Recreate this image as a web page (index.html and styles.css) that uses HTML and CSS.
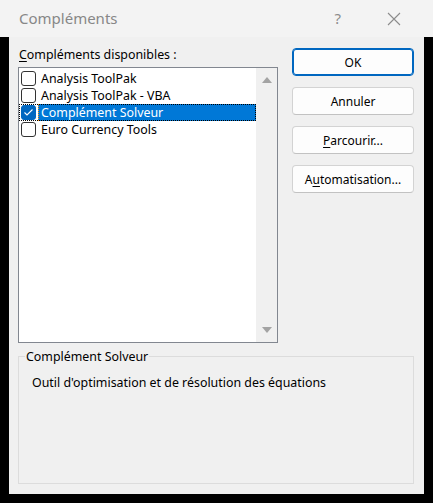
FILE: index.html
```html
<!DOCTYPE html>
<html lang="fr">
<head>
    <meta charset="UTF-8">
    <meta name="viewport" content="width=device-width, initial-scale=1.0">
    <title>Compléments</title>
    <link rel="stylesheet" href="styles.css">
</head>
<body>
    <div class="titlebar">
        <span class="title">Compléments</span>
        <span class="help">?</span>
        <svg class="close" width="14" height="14" viewBox="0 0 14 14">
            <path d="M1 1 L13 13 M13 1 L1 13" stroke="#8c8c8c" stroke-width="1.1" fill="none"/>
        </svg>
    </div>

    <div class="dialog">
        <div class="top">
            <div class="left">
                <div class="label"><u>C</u>ompléments disponibles :</div>
                <div class="listbox">
                    <div class="items">
                        <div class="item"><span class="check"></span><span class="name">Analysis ToolPak</span></div>
                        <div class="item"><span class="check"></span><span class="name">Analysis ToolPak - VBA</span></div>
                        <div class="item selected">
                            <span class="check checked">
                                <svg width="11" height="9" viewBox="0 0 11 9"><path d="M1.5 4.5 L4 7 L9.5 1.5" stroke="#fff" stroke-width="1.1" fill="none"/></svg>
                            </span>
                            <span class="name">Complément Solveur</span>
                        </div>
                        <div class="item"><span class="check"></span><span class="name">Euro Currency Tools</span></div>
                    </div>
                    <div class="scrollbar">
                        <span class="arrow up"></span>
                        <span class="arrow down"></span>
                    </div>
                </div>
            </div>
            <div class="buttons">
                <button class="default">OK</button>
                <button>Annuler</button>
                <button><u>P</u>arcourir...</button>
                <button>A<u>u</u>tomatisation...</button>
            </div>
        </div>

        <div class="group">
            <div class="group-title">Complément Solveur</div>
            <div class="group-text">Outil d'optimisation et de résolution des équations</div>
        </div>
    </div>
</body>
</html>
```

FILE: styles.css
```css
body {
    margin: 0;
    width: 433px;
    height: 503px;
    background: #000;
    font-family: "Noto Sans", "Open Sans", sans-serif;
    font-size: 12.4px;
    color: #000;
    overflow: hidden;
}
u {
    text-decoration-thickness: 1px;
    text-underline-offset: 2px;
}

/* window caption */
.titlebar {
    height: 37px;
    background: #f3f3f3;
    display: flex;
    align-items: center;
    padding-left: 19px;
}
.title {
    font-size: 15px;
    color: #878787;
    flex: 1;
    margin-top: -1px;
}
.help {
    font-size: 15px;
    color: #8c8c8c;
    margin-right: 46px;
    margin-top: -1px;
}
.close {
    margin-right: 32px;
}

/* dialog body */
.dialog {
    margin: 0 9px;
    height: 457px;
    box-sizing: border-box;
    background: #f0f0f0;
    padding: 10px 10px 0 9px;
}
.top {
    display: flex;
    gap: 14px;
}
.left {
    width: 260px;
}
.label {
    line-height: 16px;
    padding-left: 1px;
    margin-bottom: 4px;
}

/* list of add-ins */
.listbox {
    height: 276px;
    box-sizing: border-box;
    border: 1px solid #828790;
    background: #fff;
    display: flex;
}
.items {
    flex: 1;
    padding-top: 2px;
}
.item {
    height: 17px;
    display: flex;
    align-items: center;
}
.check {
    width: 13px;
    height: 13px;
    border: 1px solid #333;
    border-radius: 3px;
    background: #fff;
    margin-left: 2px;
    margin-right: 2px;
    display: flex;
    align-items: center;
    justify-content: center;
}
.check.checked {
    background: #0067c0;
    border-color: #0067c0;
}
.name {
    height: 17px;
    line-height: 17px;
    padding-left: 3px;
    flex: 1;
    white-space: nowrap;
}
.selected {
    outline: 1px dotted #000;
    outline-offset: -1px;
}
.selected .name {
    background: #0078d7;
    color: #fff;
    outline: 1px dotted #ff9a1a;
    outline-offset: -1px;
}
.scrollbar {
    width: 21px;
    background: #f0f0f0;
    display: flex;
    flex-direction: column;
    justify-content: space-between;
    align-items: center;
    padding: 9px 0;
}
.arrow {
    width: 0;
    height: 0;
    border-left: 5px solid transparent;
    border-right: 5px solid transparent;
}
.arrow.up {
    border-bottom: 6px solid #a3a3a3;
}
.arrow.down {
    border-top: 6px solid #a3a3a3;
}

/* command buttons */
.buttons {
    display: flex;
    flex-direction: column;
    gap: 11px;
    padding-top: 1px;
}
button {
    width: 122px;
    height: 28px;
    font-family: inherit;
    font-size: 12px;
    color: #000;
    background: #fdfdfd;
    border: 1px solid #d3d3d3;
    border-bottom-color: #c2c2c2;
    border-radius: 4px;
    padding: 0;
}
button.default {
    border: 1px solid #0067c0;
    box-shadow: inset 0 0 0 1px #0067c0;
}

/* description group box, title sits on the top border */
.group {
    margin-top: 13px;
    height: 128px;
    box-sizing: border-box;
    border: 1px solid #dcdcdc;
    padding: 0 0 0 13px;
}
.group-title {
    display: table;
    margin: -8px 0 0 -7px;
    padding: 0 1px;
    line-height: 16px;
    background: #f0f0f0;
}
.group-text {
    margin-top: 10px;
    line-height: 16px;
}
```
